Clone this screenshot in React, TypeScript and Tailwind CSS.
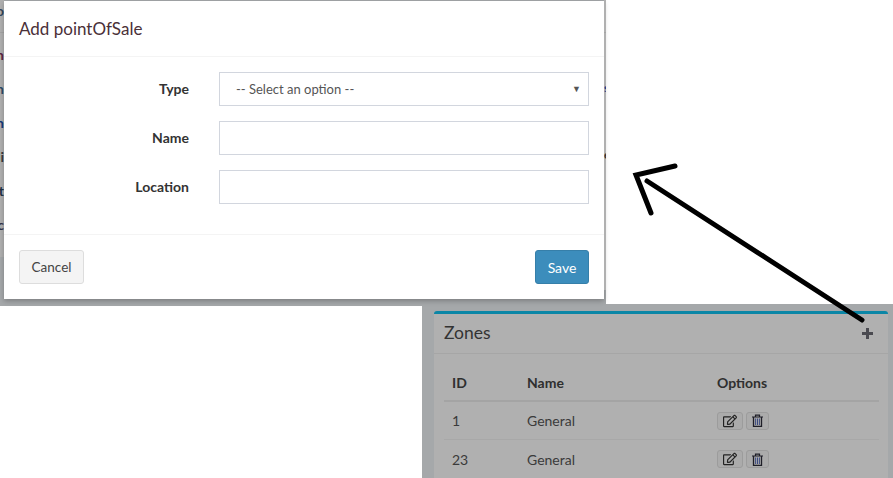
import { FaRegEdit } from "react-icons/fa";

const fieldBox = "h-[34px] w-[370px] border border-[#d2d6de] bg-white";

const leftBits = [
  { text: "n", color: "text-[#5b2340]" },
  { text: "n", color: "text-[#2c4a66]" },
  { text: "n", color: "text-[#123a7a]" },
  { text: "li", color: "text-[#3a3a3a]" },
  { text: "t", color: "text-[#1f3042]" },
  { text: "c", color: "text-[#33334a]" },
];

function TrashIcon() {
  return (
    <svg width="11" height="13" viewBox="0 0 11 13" fill="none" stroke="#1f1f28">
      <path d="M0 3H11M3.5 3V1.2H7.5V3" strokeWidth="1.2" />
      <path d="M1.5 3V12.4H9.5V3" strokeWidth="1.3" />
      <path d="M3.6 4.5V11M5.5 4.5V11M7.4 4.5V11" stroke="#3c4a80" strokeWidth="1" />
    </svg>
  );
}

function PlusIcon() {
  return (
    <svg width="11" height="11" viewBox="0 0 11 11" fill="#4a4a50">
      <path d="M4 0H7V4H11V7H7V11H4V7H0V4H4Z" />
    </svg>
  );
}

function Field({ label, children }: { label: string; children?: React.ReactNode }) {
  return (
    <div className="flex items-center">
      <span className="w-[185px] pb-[2px] text-right text-[14px] font-bold text-[#333]">{label}</span>
      <div className={`ml-[30px] flex items-center ${fieldBox}`}>{children}</div>
    </div>
  );
}

function Row({ id, last }: { id: string; last?: boolean }) {
  return (
    <div className={`flex h-[38px] items-center text-[14px] text-[#3a3a3a] ${last ? "" : "border-b border-[#a8a8a8]"}`}>
      <span className="w-[83px] pl-2">{id}</span>
      <span className="w-[190px]">General</span>
      <div className="flex gap-[3px]">
        <span className="flex h-[18px] w-[26px] items-center justify-center rounded-[3px] border border-[#9c9c9c] bg-[#ababab] text-[#222]">
          <FaRegEdit size={14} />
        </span>
        <span className="flex h-[18px] w-[23px] items-center justify-center rounded-[3px] border border-[#9c9c9c] bg-[#ababab]">
          <TrashIcon />
        </span>
      </div>
    </div>
  );
}

export default function App() {
  return (
    <div className="relative h-[478px] w-[893px] overflow-hidden bg-white font-['Lato','Noto_Sans',sans-serif]">
      {/* backdrop with the dialog on it */}
      <div className="relative z-10 flex h-[306px] w-[606px] bg-[#a5a8aa]">
        {/* slices of the page behind the dialog */}
        <div className="flex h-[257px] w-1 shrink-0 flex-col overflow-hidden bg-[#b0b0b0]">
          <div className="flex h-5 shrink-0 items-center justify-end text-[14px] font-bold text-[#33455c]">o</div>
          <div className="mt-3 h-px shrink-0 bg-[#a4a4a4]" />
          {leftBits.map((bit, i) => (
            <div
              key={i}
              className={`flex h-5 shrink-0 items-center justify-end text-[14px] font-bold ${bit.color} ${i === 0 ? "mt-[11px]" : "mt-[14px]"}`}
            >
              {bit.text}
            </div>
          ))}
        </div>

        <div className="flex w-[600px] shrink-0 flex-col pt-px">
          <div className="h-[298px] bg-white shadow-[0_2px_5px_rgba(0,0,0,0.25)]">
            <div className="flex h-[56px] items-center border-b border-[#f4f4f4] pl-[15px]">
              <h1 className="text-[17px] text-[#4a3038]">Add pointOfSale</h1>
            </div>

            <div className="flex h-[178px] flex-col gap-[15px] border-b border-[#f4f4f4] pt-[15px]">
              <Field label="Type">
                <div className="flex w-full items-center justify-between pl-4 pr-[7px]">
                  <span className="pt-px text-[13px] text-[#555]">-- Select an option --</span>
                  <span className="text-[9px] text-[#555]">▼</span>
                </div>
              </Field>
              <Field label="Name" />
              <Field label="Location" />
            </div>

            <div className="flex items-center justify-between px-[15px] pt-[15px]">
              <button className="h-[34px] w-[65px] rounded-[3px] border border-[#ddd] bg-[#f4f4f4] text-[13.5px] text-[#444]">
                Cancel
              </button>
              <button className="h-[34px] w-[54px] rounded-[3px] border border-[#367fa9] bg-[#3c8dbc] text-[14px] text-white">
                Save
              </button>
            </div>
          </div>
        </div>

        <div className="flex h-[290px] w-[2px] shrink-0 flex-col overflow-hidden bg-[#b0b0b0] text-[12px] font-bold">
          <div className="mt-8 h-px shrink-0 bg-[#a4a4a4]" />
          <span className="mt-[46px] text-[#1d3f86]">s</span>
          <span className="mt-[49px] text-[#333]">e</span>
        </div>
      </div>

      {/* zones panel behind the backdrop */}
      <div className="ml-[422px] -mt-[2px] h-[174px] bg-[#a5a8aa] pl-3 pr-[5px] pt-[7px]">
        <div className="h-[167px] rounded-t-[3px] border-t-[3px] border-[#0b86a6] bg-[#b0b0b0]">
          <div className="flex h-[40px] items-center justify-between border-b border-[#a6a6a6] pl-[10px] pr-[15px]">
            <h2 className="text-[17.5px] text-[#333]">Zones</h2>
            <PlusIcon />
          </div>
          <div className="pl-[10px] pr-[9px] pt-[9px]">
            <div className="flex h-[39px] items-center border-b-2 border-[#a4a4a4] pt-px text-[14px] font-bold text-[#2f2f2f]">
              <span className="w-[83px] pl-2">ID</span>
              <span className="w-[190px]">Name</span>
              <span>Options</span>
            </div>
            <Row id="1" />
            <Row id="23" last />
          </div>
        </div>
      </div>

      {/* hand drawn arrow */}
      <svg className="absolute left-0 top-0 z-20" width="893" height="478" fill="none">
        <path d="M647 181L862 320" stroke="#000" strokeWidth="5" strokeLinecap="round" />
        <path d="M675 166L636 175L651 213" stroke="#000" strokeWidth="5" strokeLinecap="round" strokeLinejoin="miter" />
      </svg>
    </div>
  );
}
